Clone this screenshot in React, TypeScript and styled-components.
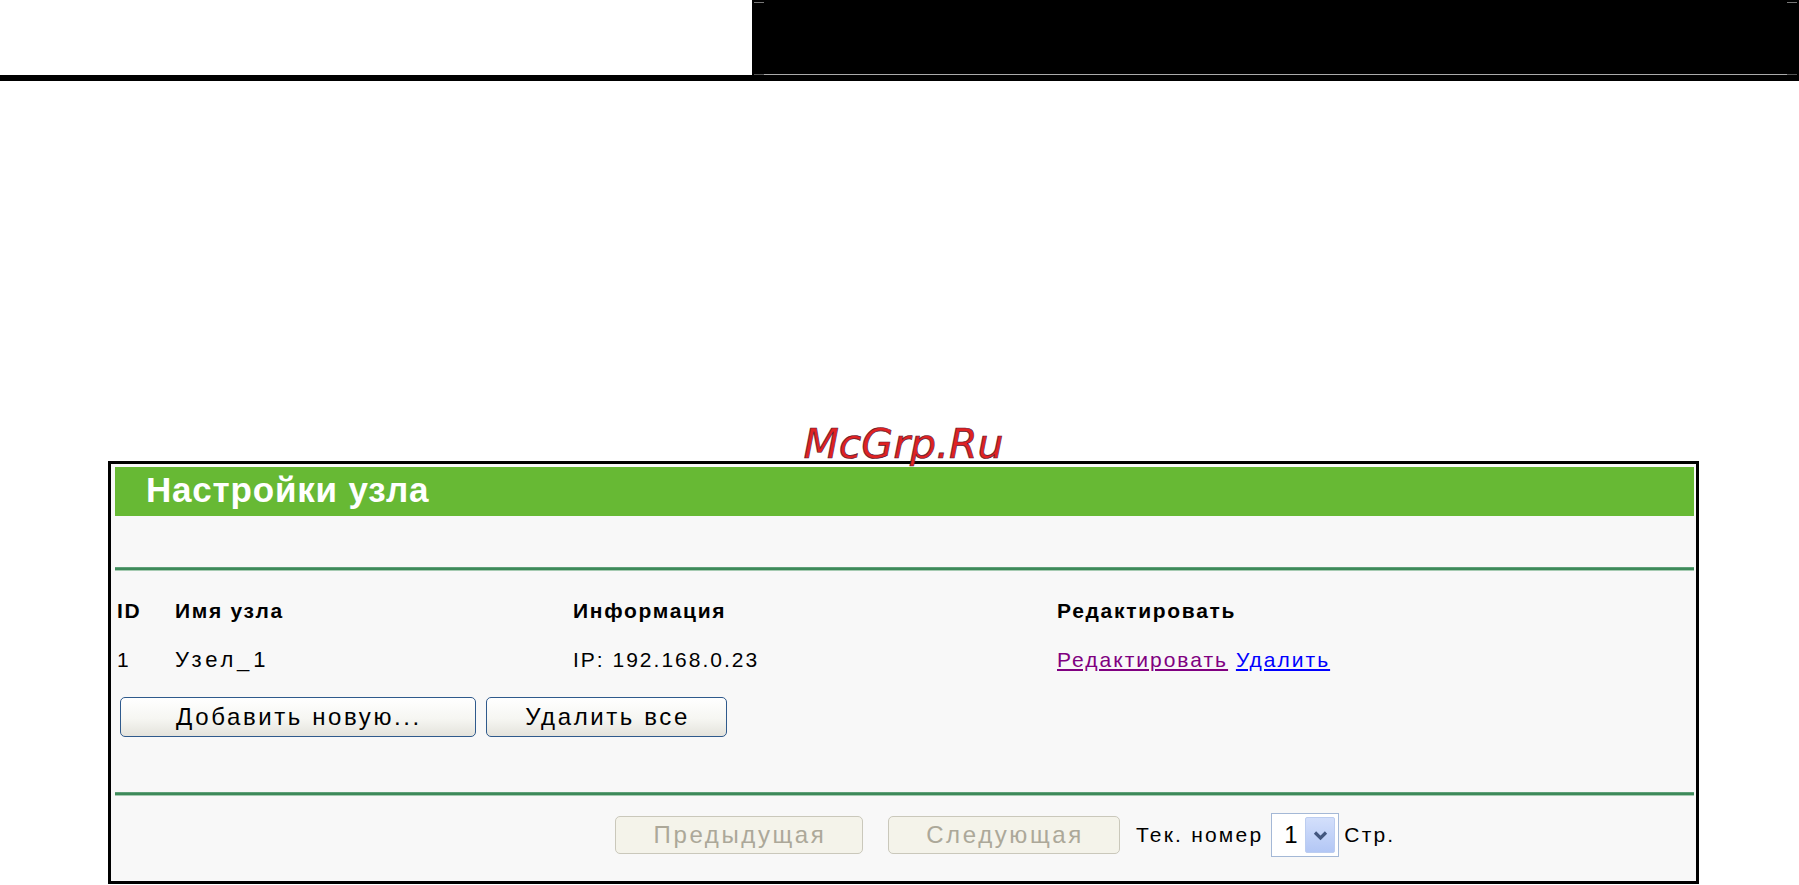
import styled, { createGlobalStyle } from "styled-components";

const GlobalStyle = createGlobalStyle`
  html, body {
    margin: 0;
    padding: 0;
    background: #fff;
  }
  body {
    font-family: "Liberation Sans", Arial, sans-serif;
    color: #000;
  }
`;

interface Node {
  id: number;
  name: string;
  ip: string;
}

const nodes: Node[] = [{ id: 1, name: "Узел_1", ip: "192.168.0.23" }];

export default function App() {
  return (
    <>
      <GlobalStyle />
      <TopBar>
        <TopBlank />
        <TopDark />
      </TopBar>

      <Main>
        <Watermark>McGrp.Ru</Watermark>

        <Panel>
          <TitleBar>Настройки узла</TitleBar>
          <Spacer />
          <Divider />

          <NodeTable>
            <HeadCell>ID</HeadCell>
            <HeadCell>Имя узла</HeadCell>
            <HeadCell>Информация</HeadCell>
            <HeadCell>Редактировать</HeadCell>

            {nodes.map((node) => (
              <Row key={node.id}>
                <Cell>{node.id}</Cell>
                <Cell $size={22} $spacing={3.8}>
                  {node.name}
                </Cell>
                <Cell>IP: {node.ip}</Cell>
                <Cell>
                  <Link $visited href="#">Редактировать</Link>{" "}
                  <Link href="#">Удалить</Link>
                </Cell>
              </Row>
            ))}
          </NodeTable>

          <ActionRow>
            <Button $w={356}>Добавить новую...</Button>
            <Button $w={241}>Удалить все</Button>
          </ActionRow>

          <Divider />

          <Pager>
            <Button $w={248} $h={38} disabled>
              Предыдущая
            </Button>
            <Button $w={232} $h={38} disabled>
              Следующая
            </Button>
            <PageInfo>
              <span>Тек. номер</span>
              <PageSelect>
                <span>1</span>
                <SelectArrow>
                  <svg width="15" height="11" viewBox="0 0 15 11">
                    <path
                      d="M2 2.5 L7.5 8 L13 2.5"
                      fill="none"
                      stroke="#43577f"
                      strokeWidth="3.2"
                    />
                  </svg>
                </SelectArrow>
              </PageSelect>
              <span>Стр.</span>
            </PageInfo>
          </Pager>
        </Panel>
      </Main>
    </>
  );
}

const TopBar = styled.header`
  display: flex;
  height: 75px;
  border-bottom: 6px solid #000;
`;

const TopBlank = styled.div`
  width: 752px;
  background: #fff;
`;

const TopDark = styled.div`
  flex: 1;
  background: #000;
  position: relative;

  /* crop marks */
  &::before {
    content: "";
    position: absolute;
    left: 2px;
    top: 2px;
    width: 10px;
    height: 1px;
    background: #777;
    box-shadow: 1033px 0 0 #777;
  }
  &::after {
    content: "";
    position: absolute;
    left: 2px;
    right: 2px;
    bottom: 0;
    height: 1px;
    background: linear-gradient(
      to right,
      #555 10px,
      #aaa 10px,
      #aaa calc(100% - 10px),
      #555 calc(100% - 10px)
    );
  }
`;

const Main = styled.main`
  padding: 343px 0 0 108px;
`;

const Watermark = styled.div`
  width: 1591px;
  height: 37px;
  line-height: 40px;
  text-align: center;
  font-family: "DejaVu Sans", sans-serif;
  font-style: italic;
  font-size: 41px;
  color: #e02222;
  -webkit-text-stroke: 0.7px #5a1830;
`;

const Panel = styled.section`
  box-sizing: border-box;
  width: 1591px;
  border: 3px solid #000;
  background: #f8f8f8;
  padding: 3px 2px 0 4px;
`;

const TitleBar = styled.div`
  height: 49px;
  box-sizing: border-box;
  padding: 0 0 3px 31px;
  line-height: 46px;
  background: #67b934;
  color: #fff;
  font-size: 35px;
  font-weight: bold;
  letter-spacing: 0.8px;
`;

const Spacer = styled.div`
  height: 51px;
`;

const Divider = styled.div`
  height: 4px;
  background: linear-gradient(#7fb595 0, #3e8a5a 1px, #3e8a5a 3px, #a6cbb2 3px);
`;

const NodeTable = styled.div`
  display: grid;
  grid-template-columns: 58px 398px 484px 1fr;
  row-gap: 13px;
  padding-top: 22px;
  line-height: 36px;
`;

const Row = styled.div`
  display: contents;
`;

const HeadCell = styled.div`
  padding-left: 2px;
  font-size: 21px;
  font-weight: bold;
  letter-spacing: 1.7px;
  white-space: nowrap;
`;

const Cell = styled.div<{ $size?: number; $spacing?: number }>`
  padding-left: 2px;
  font-size: ${(p) => p.$size ?? 21}px;
  letter-spacing: ${(p) => p.$spacing ?? 2}px;
  white-space: nowrap;
`;

const Link = styled.a<{ $visited?: boolean }>`
  color: ${(p) => (p.$visited ? "#800080" : "#0000ff")};
  letter-spacing: 2px;
  text-decoration: underline;
`;

const ActionRow = styled.div`
  display: flex;
  gap: 10px;
  padding: 19px 0 55px 5px;
`;

const Button = styled.button<{ $w: number; $h?: number }>`
  box-sizing: border-box;
  width: ${(p) => p.$w}px;
  height: ${(p) => p.$h ?? 40}px;
  padding: 0 0 0 2px;
  font-family: "Liberation Sans", Arial, sans-serif;
  font-size: 24px;
  letter-spacing: 2.6px;
  color: #000;
  border: 1.5px solid #2f5a8c;
  border-radius: 5px;
  background: linear-gradient(#ffffff, #f6f6f2 55%, #e4e3dc);

  &:disabled {
    color: #aca899;
    border: 1.5px solid #cac8bb;
    background: #f4f3ea;
  }
`;

const Pager = styled.div`
  display: flex;
  align-items: center;
  gap: 25px;
  height: 44px;
  padding: 17px 0 24px 500px;
`;

const PageInfo = styled.div`
  display: flex;
  align-items: center;
  gap: 8px;
  margin-left: -9px;
  font-size: 21px;
  letter-spacing: 2.2px;
`;

const PageSelect = styled.div`
  box-sizing: border-box;
  display: flex;
  align-items: center;
  width: 68px;
  height: 44px;
  margin-right: -3px;
  padding: 3px 3px 3px 12px;
  border: 1px solid #a4b8d6;
  background: #fff;
  font-size: 24px;
`;

const SelectArrow = styled.div`
  margin-left: auto;
  width: 30px;
  height: 36px;
  display: flex;
  align-items: center;
  justify-content: center;
  border: 1px solid #bccdf0;
  border-radius: 2px;
  box-sizing: border-box;
  background: linear-gradient(#d3dffb, #b3c7f5);
`;
